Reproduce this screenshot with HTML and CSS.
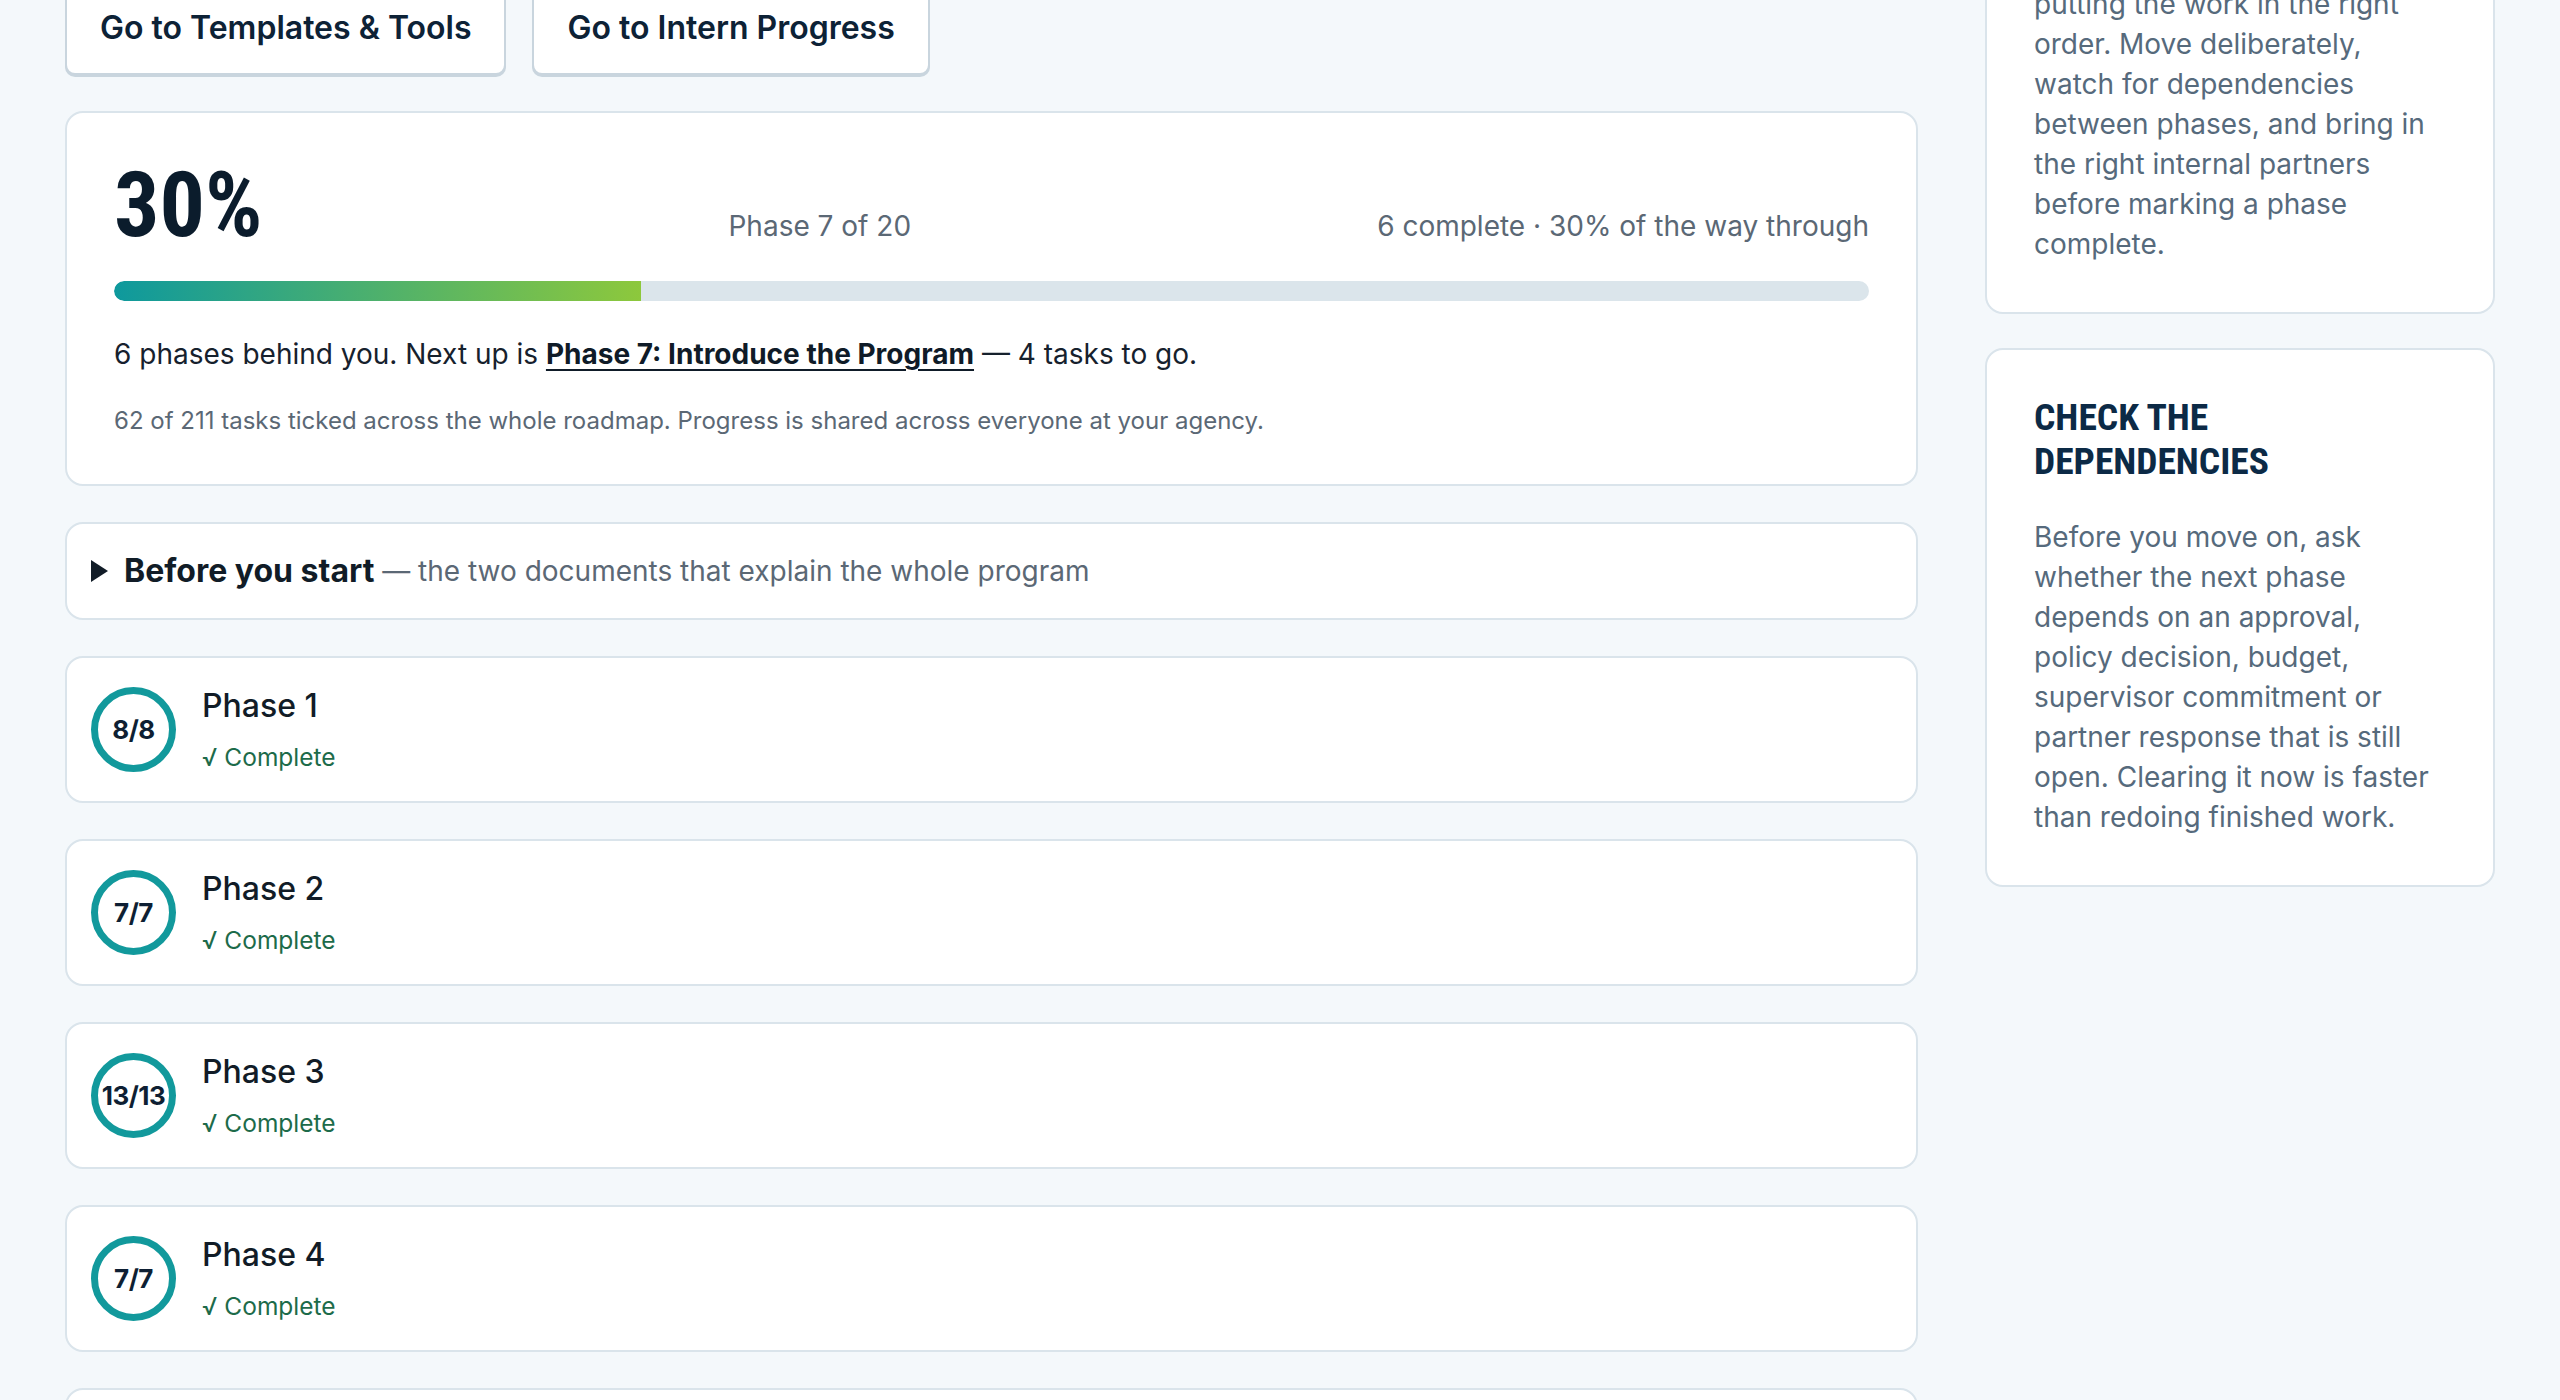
FILE: index.html
```html
<!DOCTYPE html>
<html lang="en">

<head>
	<meta charset="UTF-8">
	<meta name="viewport" content="width=device-width, initial-scale=1.0">
	<title>Roadmap | Intern Program</title>
	<link rel="stylesheet" href="styles.css">
</head>

<body>
	<div class="page">

		<main class="main">
			<header class="intro">
				<h1 class="intro-title">Your Roadmap</h1>
				<p class="intro-text">Twenty phases, one at a time.</p>
			</header>

			<div class="actions">
				<a href="#templates" class="btn">Go to Templates &amp; Tools</a>
				<a href="#progress" class="btn">Go to Intern Progress</a>
			</div>

			<section class="card progress">
				<div class="progress-head">
					<span class="progress-pct">30%</span>
					<span class="progress-meta">Phase 7 of 20</span>
					<span class="progress-meta">6 complete · 30% of the way through</span>
				</div>
				<div class="bar">
					<div class="bar-fill" style="width: 30%"></div>
				</div>
				<p class="progress-next">6 phases behind you. Next up is <a href="#phase-7">Phase 7: Introduce the Program</a> — 4 tasks to go.</p>
				<p class="progress-note">62 of 211 tasks ticked across the whole roadmap. Progress is shared across everyone at your agency.</p>
			</section>

			<details class="card docs">
				<summary><strong>Before you start</strong> — the two documents that explain the whole program</summary>
				<ul class="docs-list">
					<li><a href="#guide">Program Guide</a></li>
					<li><a href="#overview">Roadmap Overview</a></li>
				</ul>
			</details>

			<ol class="phases">
				<li class="card phase">
					<span class="ring">8/8</span>
					<div class="phase-body">
						<div class="phase-name">Phase 1</div>
						<div class="phase-status">√ Complete</div>
					</div>
				</li>
				<li class="card phase">
					<span class="ring">7/7</span>
					<div class="phase-body">
						<div class="phase-name">Phase 2</div>
						<div class="phase-status">√ Complete</div>
					</div>
				</li>
				<li class="card phase">
					<span class="ring">13/13</span>
					<div class="phase-body">
						<div class="phase-name">Phase 3</div>
						<div class="phase-status">√ Complete</div>
					</div>
				</li>
				<li class="card phase">
					<span class="ring">7/7</span>
					<div class="phase-body">
						<div class="phase-name">Phase 4</div>
						<div class="phase-status">√ Complete</div>
					</div>
				</li>
				<li class="card phase">
					<span class="ring">9/9</span>
					<div class="phase-body">
						<div class="phase-name">Phase 5</div>
						<div class="phase-status">√ Complete</div>
					</div>
				</li>
				<li class="card phase">
					<span class="ring">8/8</span>
					<div class="phase-body">
						<div class="phase-name">Phase 6</div>
						<div class="phase-status">√ Complete</div>
					</div>
				</li>
			</ol>
		</main>

		<aside class="side">
			<section class="card tip">
				<h2 class="tip-title">Work in order</h2>
				<p class="tip-text">Real progress comes from putting the work in the right order. Move deliberately, watch for dependencies between phases, and bring in the right internal partners before marking a phase complete.</p>
			</section>
			<section class="card tip">
				<h2 class="tip-title">Check the dependencies</h2>
				<p class="tip-text">Before you move on, ask whether the next phase depends on an approval, policy decision, budget, supervisor commitment or partner response that is still open. Clearing it now is faster than redoing finished work.</p>
			</section>
		</aside>

	</div>
</body>

</html>
```

FILE: styles.css
```css
/* page */
body {
	margin: 0;
	background-color: #f4f8fb;
	font-family: Inter, "Noto Sans", sans-serif;
	color: #16212d;
}

.page {
	display: grid;
	grid-template-columns: 1fr 510px;
	gap: 67px;
	padding: 0 65px;
	margin-top: -181px;
	align-items: start;
}

.main {
	display: flex;
	flex-direction: column;
	gap: 36px;
	min-width: 0;
}

.card {
	background-color: white;
	border: 2px solid #dae4eb;
	border-radius: 18px;
}

/* intro (scrolled past) */
.intro-title {
	margin: 0 0 30px;
	font-size: 48px;
	line-height: 56px;
}

.intro-text {
	margin: 0;
	font-size: 28px;
	line-height: 40px;
}

/* buttons */
.actions {
	display: flex;
	gap: 26px;
}

.btn {
	display: inline-block;
	padding: 27px 33px;
	font-size: 32px;
	line-height: 36px;
	font-weight: 600;
	color: #0d2236;
	text-decoration: none;
	background-color: white;
	border: 2px solid #c9d5de;
	border-radius: 10px;
	box-shadow: 0 2px 0 #c9d5de;
}

/* progress card */
.progress {
	padding: 47px 47px 46px;
}

.progress-head {
	display: flex;
	justify-content: space-between;
	align-items: baseline;
	height: 91px;
}

.progress-pct {
	font-family: "Roboto Condensed", Roboto, sans-serif;
	font-stretch: condensed;
	font-size: 90px;
	line-height: 91px;
	font-weight: 700;
	color: #0b1c2c;
}

.progress-meta {
	font-size: 28px;
	color: #5b6875;
}

.bar {
	margin-top: 30px;
	height: 20px;
	border-radius: 10px;
	background-color: #dbe5eb;
	overflow: hidden;
}

.bar-fill {
	height: 100%;
	background: linear-gradient(90deg, #0e999d, #8dc83c);
	border-radius: 10px 0 0 10px;
}

.progress-next {
	margin: 33px 0 0;
	font-size: 28px;
	line-height: 40px;
	color: #16212d;
}

.progress-next a {
	font-weight: 700;
	color: #0f1b28;
	text-decoration: underline;
	text-decoration-thickness: 2px;
	text-underline-offset: 5px;
}

.progress-note {
	margin: 30px 0 0;
	font-size: 24px;
	line-height: 34px;
	color: #5b6875;
}

/* before you start */
.docs summary {
	display: flex;
	align-items: center;
	height: 40px;
	padding: 27px 24px;
	font-size: 28px;
	line-height: 40px;
	color: #5b6875;
	list-style: none;
	cursor: pointer;
	white-space: pre;
}

.docs summary::-webkit-details-marker {
	display: none;
}

.docs summary::before {
	content: "";
	margin-right: 16px;
	border-left: 17px solid #111c27;
	border-top: 11px solid transparent;
	border-bottom: 11px solid transparent;
}

.docs summary strong {
	font-size: 32px;
	font-weight: 700;
	color: #111c27;
}

.docs-list {
	margin: 0;
	padding: 0 24px 27px 57px;
	font-size: 26px;
	line-height: 40px;
}

/* phases */
.phases {
	display: flex;
	flex-direction: column;
	gap: 36px;
	margin: 0;
	padding: 0;
	list-style: none;
}

.phase {
	display: flex;
	align-items: center;
	gap: 26px;
	padding: 28px 24px;
}

.ring {
	display: flex;
	justify-content: center;
	align-items: center;
	flex: none;
	box-sizing: border-box;
	width: 85px;
	height: 85px;
	border: 7px solid #12999c;
	border-radius: 50%;
	font-size: 26px;
	font-weight: 700;
	letter-spacing: -0.5px;
	color: #0e1f33;
	white-space: nowrap;
}

.phase-name {
	font-size: 32px;
	line-height: 40px;
	font-weight: 500;
	color: #111c27;
}

.phase-status {
	margin-top: 15px;
	font-size: 24.5px;
	line-height: 32px;
	color: #1d6b4a;
}

/* side column */
.side {
	display: flex;
	flex-direction: column;
	gap: 34px;
}

.tip {
	padding: 45px 47px 48px;
}

.tip-title {
	margin: 0 0 34px;
	font-family: "Roboto Condensed", Roboto, sans-serif;
	font-stretch: condensed;
	font-size: 37.5px;
	line-height: 44px;
	font-weight: 700;
	text-transform: uppercase;
	color: #0c2a46;
}

.tip-text {
	margin: 0;
	font-size: 28px;
	line-height: 40px;
	color: #566a7c;
}
```
